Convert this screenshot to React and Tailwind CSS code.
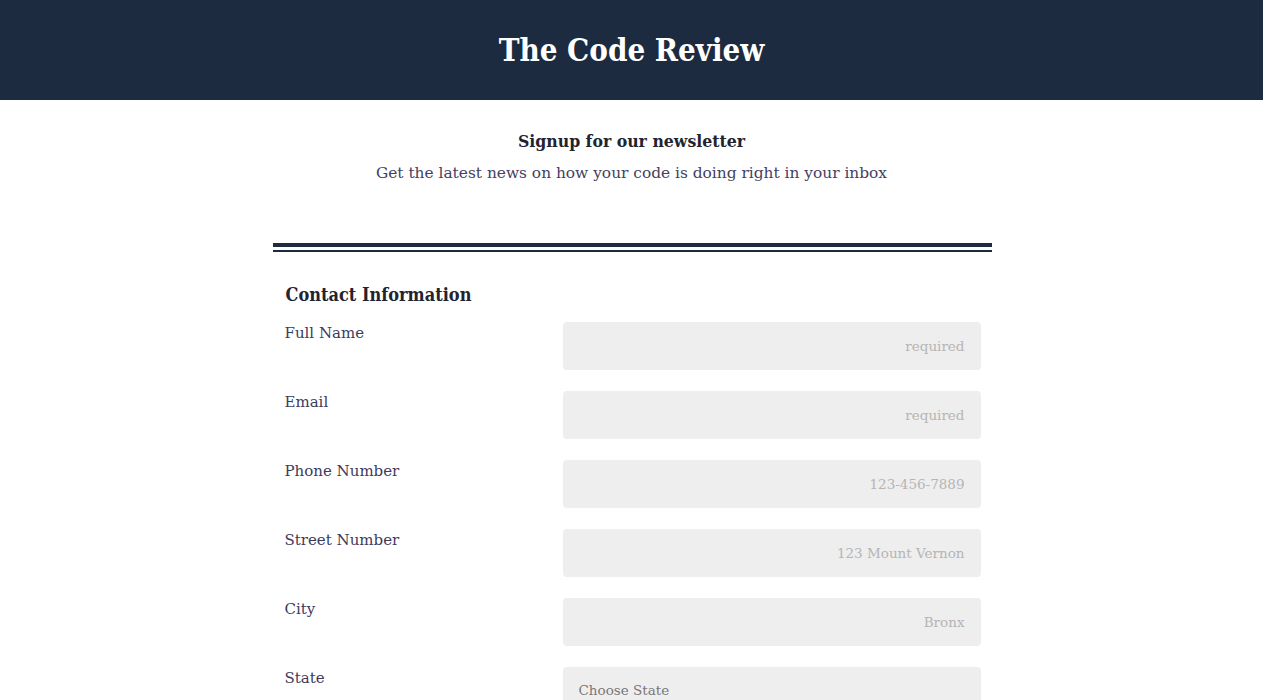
const fields = [
  { label: 'Full Name', placeholder: 'required' },
  { label: 'Email', placeholder: 'required' },
  { label: 'Phone Number', placeholder: '123-456-7889' },
  { label: 'Street Number', placeholder: '123 Mount Vernon' },
  { label: 'City', placeholder: 'Bronx' },
]

function App() {
  return (
    <div className="min-h-screen bg-white font-['DejaVu_Serif',serif]">
      <header className="flex h-[100px] items-center justify-center bg-[#1c2b40]">
        <h1 className="font-['DejaVu_Serif_Condensed','DejaVu_Serif',serif] text-[31px] font-bold text-white">
          The Code Review
        </h1>
      </header>

      <div className="mx-auto w-[720px]">
        <div className="pt-[28px] text-center">
          <h2 className="font-['DejaVu_Serif_Condensed','DejaVu_Serif',serif] text-[17.5px] font-bold text-[#1f2430]">
            Signup for our newsletter
          </h2>
          <p className="mt-[8px] text-[15.4px] text-[#45405f]">
            Get the latest news on how your code is doing right in your inbox
          </p>
        </div>

        <div className="mt-[58px] ml-[1px] border-t-4 border-[#1c2b40]" />
        <div className="mt-[3px] ml-[1px] border-t-2 border-[#1c2b40]" />

        <h3 className="mt-[29px] pl-[14px] font-['DejaVu_Serif_Condensed','DejaVu_Serif',serif] text-[18px] font-bold text-[#1f2430]">
          Contact Information
        </h3>

        <form className="mt-[14px] flex flex-col gap-[21px] pl-[13px] pr-[11px]">
          {fields.map((f) => (
            <div key={f.label} className="flex">
              <label className="w-[278px] text-[15px] text-[#3d3a5c]">{f.label}</label>
              <input
                type="text"
                placeholder={f.placeholder}
                className="h-[48px] w-[418px] rounded-[4px] bg-[#eeeeee] px-[16px] text-right text-[13.5px] outline-none placeholder:text-[#b5b5b5]"
              />
            </div>
          ))}
          <div className="flex">
            <label className="w-[278px] text-[15px] text-[#3d3a5c]">State</label>
            <select className="h-[48px] w-[418px] appearance-none rounded-[4px] bg-[#eeeeee] pl-[16px] pb-[2px] text-[13.5px] text-[#777777] outline-none">
              <option>Choose State</option>
            </select>
          </div>
        </form>
      </div>
    </div>
  )
}

export default App
